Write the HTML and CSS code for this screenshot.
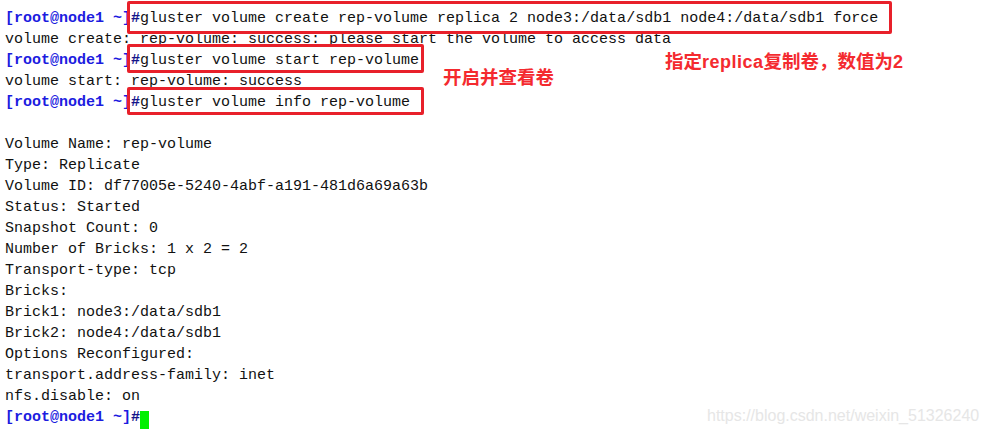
FILE: index.html
```html
<!DOCTYPE html>
<html>
<head>
<meta charset="utf-8">
<link rel="stylesheet" href="styles.css">
</head>
<body>
<div class="screen">
<pre class="term"><span class="p">[root@node1 ~]</span><span class="h">#</span>gluster volume create rep-volume replica 2 node3:/data/sdb1 node4:/data/sdb1 force
volume create: rep-volume: success: please start the volume to access data
<span class="p">[root@node1 ~]</span><span class="h">#</span>gluster volume start rep-volume
volume start: rep-volume: success
<span class="p">[root@node1 ~]</span><span class="h">#</span>gluster volume info rep-volume

Volume Name: rep-volume
Type: Replicate
Volume ID: df77005e-5240-4abf-a191-481d6a69a63b
Status: Started
Snapshot Count: 0
Number of Bricks: 1 x 2 = 2
Transport-type: tcp
Bricks:
Brick1: node3:/data/sdb1
Brick2: node4:/data/sdb1
Options Reconfigured:
transport.address-family: inet
nfs.disable: on
<span class="p">[root@node1 ~]</span><span class="h">#</span><span class="cursor"> </span></pre>
<div class="box box1"></div>
<div class="box box2"></div>
<div class="box box3"></div>
<div class="note note1">开启并查看卷</div>
<div class="note note2">指定<span class="lat">replica</span>复制卷，数值为<span class="lat">2</span></div>
<div class="mark">https://blog.csdn.net/weixin_51326240</div>
</div>
</body>
</html>
```
FILE: styles.css
```css
html, body {
  margin: 0;
  padding: 0;
  background: #ffffff;
}
.screen {
  position: relative;
  width: 987px;
  height: 436px;
  overflow: hidden;
}
.term {
  margin: 0;
  padding: 8px 0 0 5px;
  font-family: "Liberation Mono", "DejaVu Sans Mono", monospace;
  font-size: 15px;
  line-height: 21px;
  color: #111111;
}
.p {
  color: #1c1ce0;
  font-weight: bold;
}
.h {
  color: #14148a;
  font-weight: bold;
}
.cursor {
  display: inline-block;
  width: 9px;
  height: 18px;
  background: #00f000;
  vertical-align: -4px;
}
.box {
  position: absolute;
  border: 3.5px solid #e8202a;
  border-radius: 2px;
  box-sizing: border-box;
}
.box1 { left: 127px; top: 1px; width: 765px; height: 33px; }
.box2 { left: 127px; top: 44px; width: 297px; height: 29px; }
.box3 { left: 127px; top: 87px; width: 297px; height: 28px; }
.note {
  position: absolute;
  font-family: "Noto Sans CJK SC", sans-serif;
  font-weight: bold;
  font-size: 18.5px;
  line-height: 20px;
  color: #f42a2f;
  white-space: nowrap;
}
.lat {
  font-family: "Liberation Sans", Arial, sans-serif;
  font-size: 18px;
  font-weight: bold;
  letter-spacing: 0.5px;
}
.note1 { left: 443px; top: 66px; }
.note2 { left: 665px; top: 50px; }
.mark {
  position: absolute;
  left: 707px;
  top: 407px;
  font-family: "Liberation Sans", Arial, sans-serif;
  font-size: 16px;
  color: #e6e6e6;
}
```
